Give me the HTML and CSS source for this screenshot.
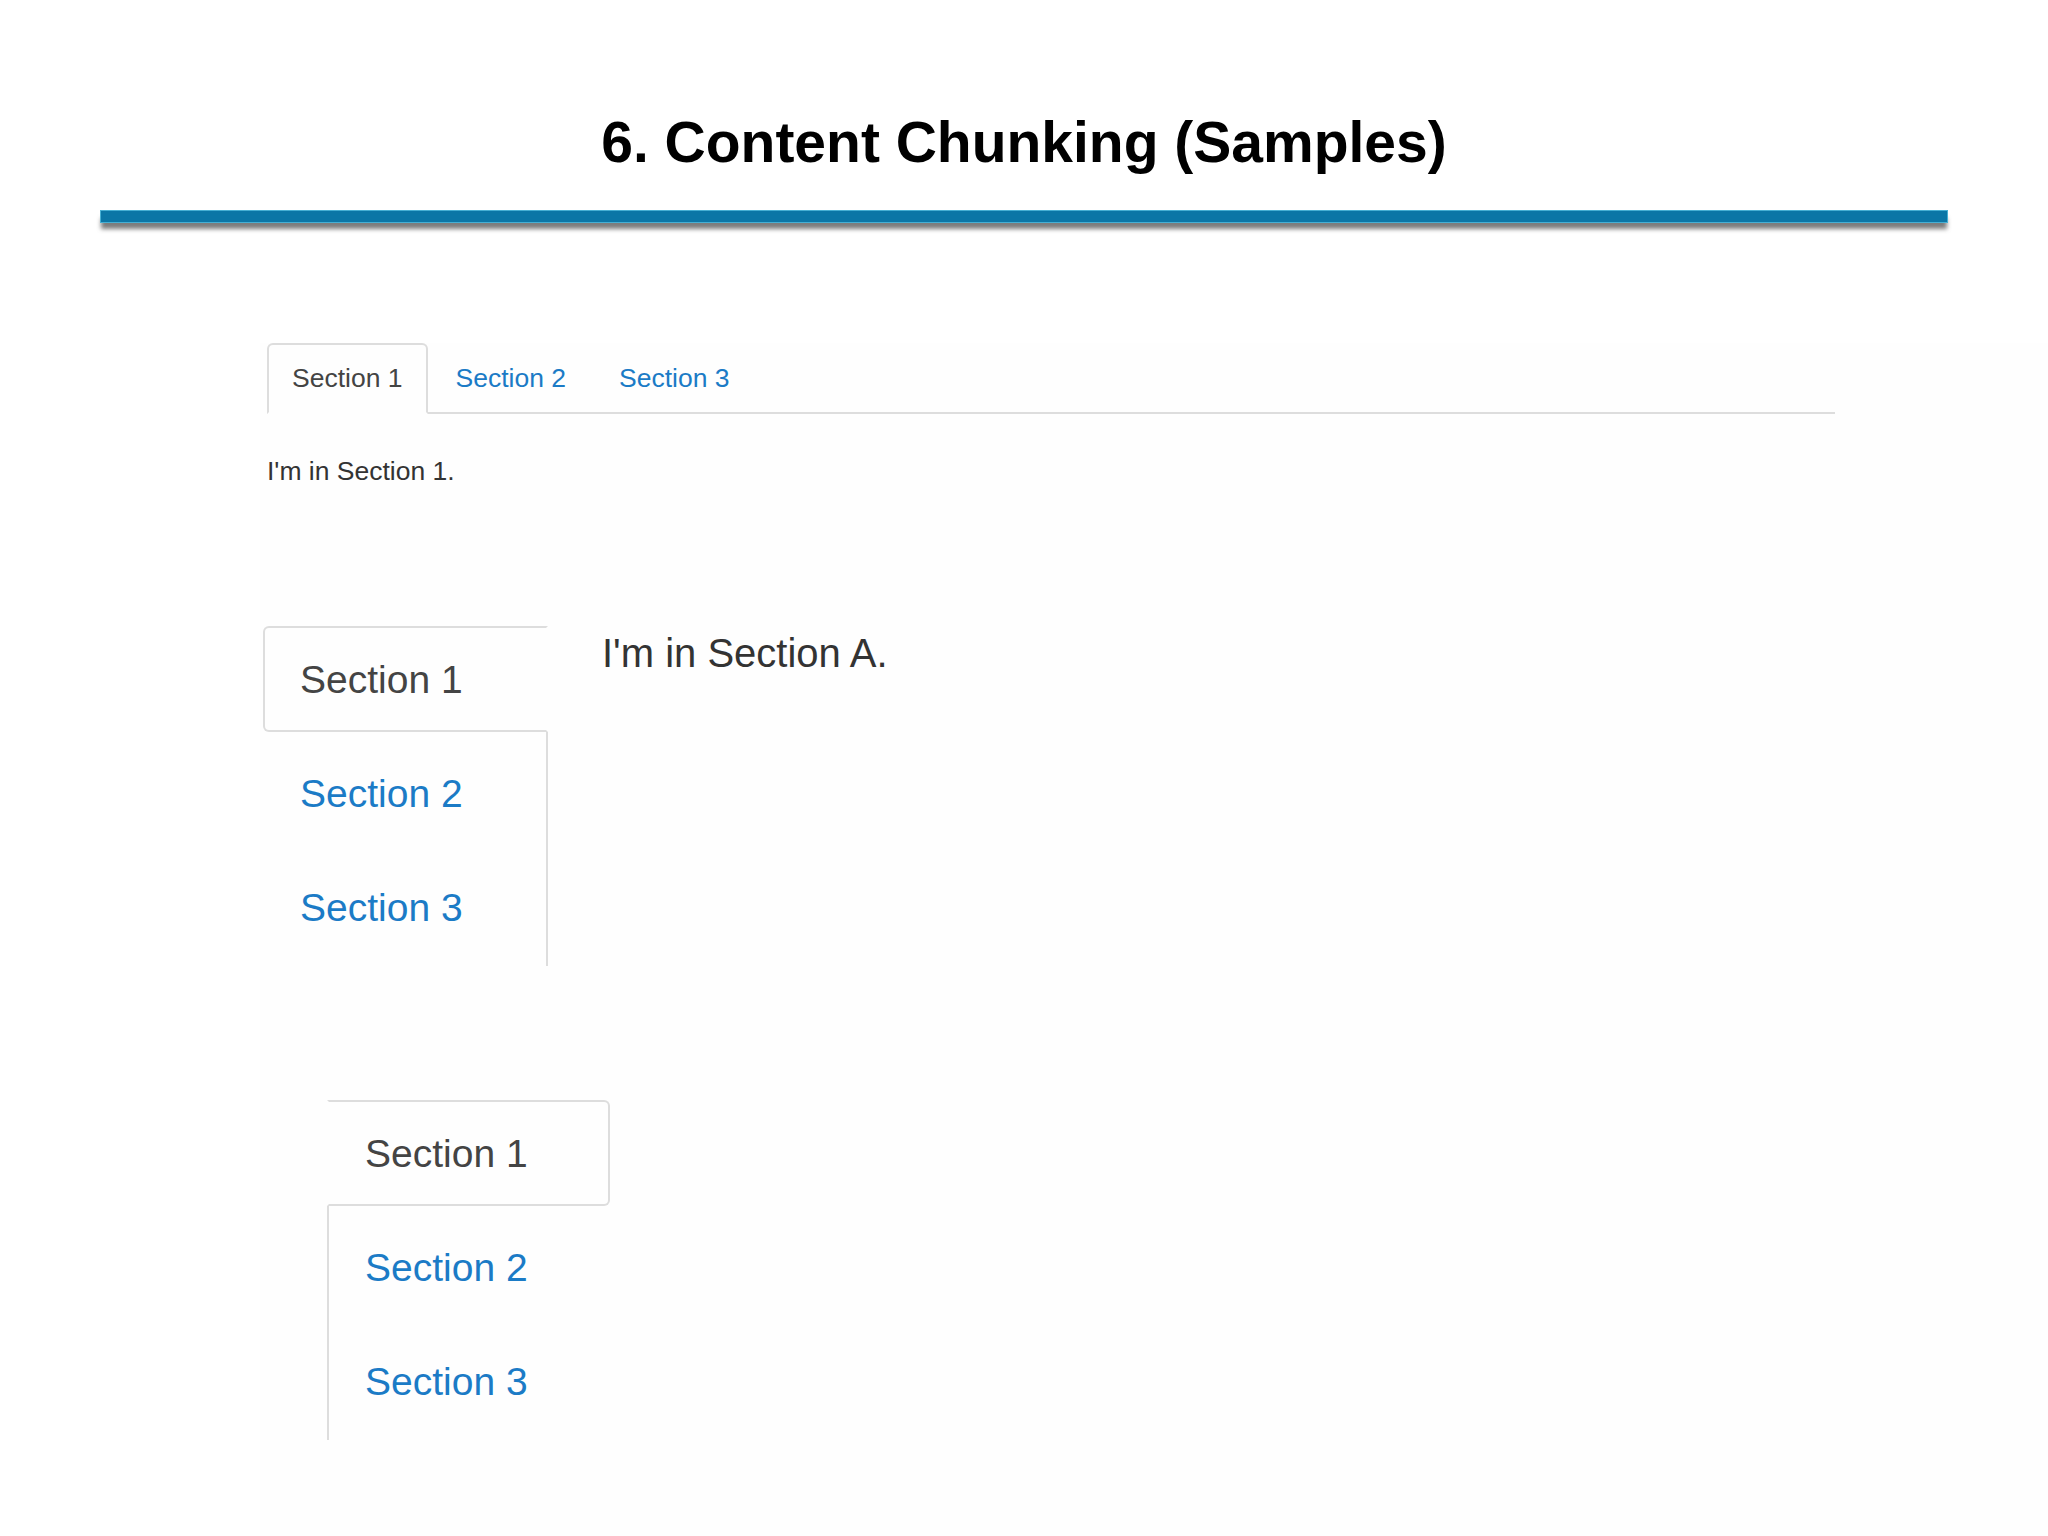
FILE: index.html
```html
<!DOCTYPE html>
<html lang="en">
<head>
<meta charset="utf-8">
<title>6. Content Chunking (Samples)</title>
<link rel="stylesheet" href="styles.css">
</head>
<body>
<header class="slide-head">
  <h1 class="title">6. Content Chunking (Samples)</h1>
  <div class="rule"></div>
</header>
<main class="samples">
  <section class="sample sample-h">
    <ul class="tabs-h">
      <li class="tab active">Section 1</li>
      <li class="tab">Section 2</li>
      <li class="tab">Section 3</li>
    </ul>
    <p class="pane-text">I'm in Section 1.</p>
  </section>
  <section class="sample sample-left">
    <ul class="tabs-v tabs-left">
      <li class="tab active">Section 1</li>
      <li class="tab">Section 2</li>
      <li class="tab">Section 3</li>
    </ul>
    <p class="pane-text-lg">I'm in Section A.</p>
  </section>
  <section class="sample sample-right">
    <ul class="tabs-v tabs-right">
      <li class="tab active">Section 1</li>
      <li class="tab">Section 2</li>
      <li class="tab">Section 3</li>
    </ul>
  </section>
</main>
</body>
</html>
```
FILE: styles.css
```css
* { box-sizing: border-box; }
html, body { margin: 0; padding: 0; }
body {
  width: 2048px;
  height: 1536px;
  overflow: hidden;
  background: #ffffff;
  font-family: "Liberation Sans", Arial, Helvetica, sans-serif;
}
.slide-head { padding-top: 110px; }
.title {
  margin: 0;
  font-size: 57px;
  line-height: 64px;
  font-weight: 700;
  text-align: center;
  color: #000;
}
.rule {
  margin: 36px 100px 0 100px;
  height: 13px;
  background: #0b76a6;
  border: 1px solid #46afd3;
  box-shadow: 0 7px 4px -1px rgba(80, 80, 80, 0.75);
}
.samples {
  margin: 120px 0 0 260px;
  padding-left: 7px;
  min-height: 1193px;
  background: #fefefe;
}
.tab { list-style: none; color: #1b7bc6; }
.tab.active { color: #444; background: #fefefe; }

/* horizontal tabs */
.tabs-h {
  display: flex;
  margin: 0;
  padding: 0;
  width: 1568px;
  border-bottom: 2px solid #dddddd;
}
.tabs-h .tab {
  font-size: 26.5px;
  line-height: 30px;
  padding: 18px 23px 19px;
  border: 2px solid transparent;
  border-radius: 6px 6px 0 0;
  margin: 0 3px -2px 0;
}
.tabs-h .tab.active { border-color: #dddddd #dddddd transparent; }
.pane-text {
  margin: 42px 0 0;
  font-size: 26.5px;
  line-height: 30px;
  color: #333;
}

/* vertical tabs */
.sample-left {
  display: flex;
  align-items: flex-start;
  margin: 140px 0 0 -4px;
}
.sample-right { margin: 134px 0 0 60px; }
.tabs-v {
  margin: 0;
  padding: 0 0 6px;
  width: 285px;
}
.tabs-v .tab {
  font-size: 39px;
  line-height: 44px;
  padding: 30px 0 28px 35px;
  border: 2px solid transparent;
}
.tabs-v .tab + .tab { margin-top: 8px; }
.tabs-left { border-right: 2px solid #dddddd; }
.tabs-left .tab { margin-right: -2px; border-radius: 6px 0 0 6px; }
.tabs-left .tab.active { border-color: #dddddd transparent #dddddd #dddddd; }
.tabs-right { border-left: 2px solid #dddddd; width: 283px; }
.tabs-right .tab { margin-left: -2px; padding-left: 36px; border-radius: 0 6px 6px 0; }
.tabs-right .tab.active { border-color: #dddddd #dddddd #dddddd transparent; }
.pane-text-lg {
  margin: 4px 0 0 54px;
  font-size: 40px;
  line-height: 46px;
  color: #333;
}
```
